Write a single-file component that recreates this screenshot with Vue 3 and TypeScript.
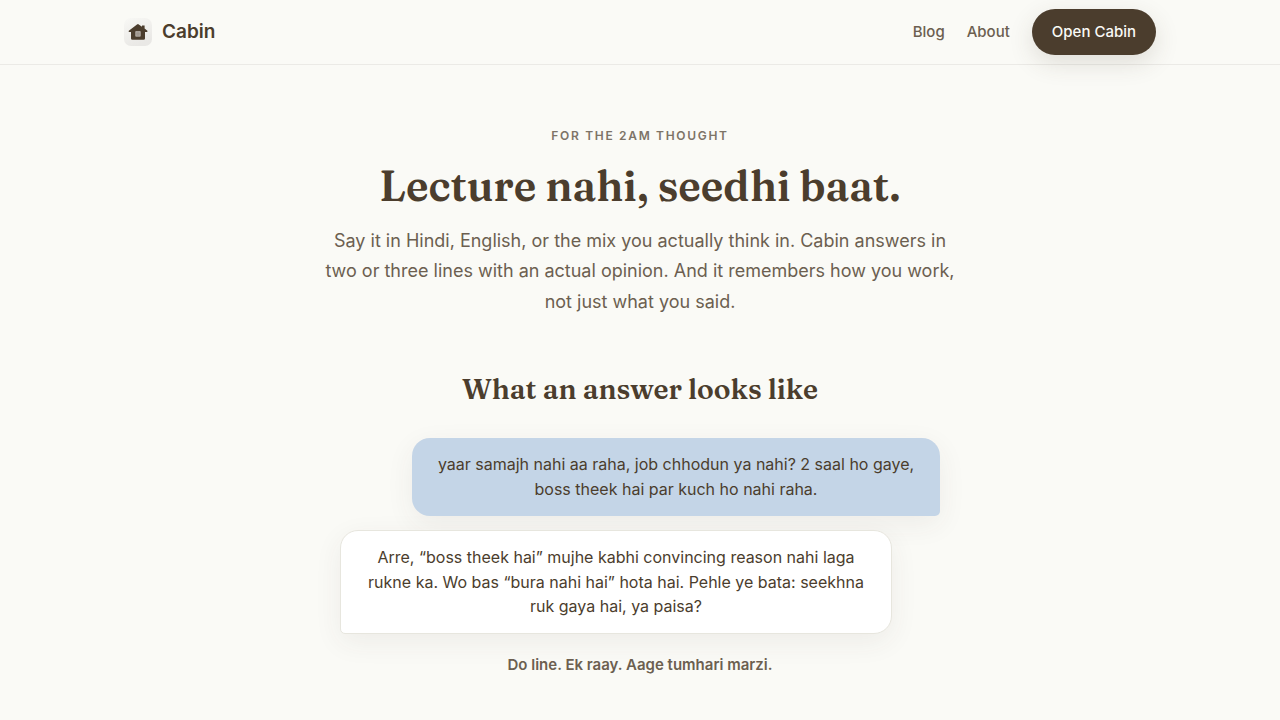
<script setup lang="ts">
interface NavLink {
  label: string
  href: string
}

interface Message {
  from: 'user' | 'cabin'
  text: string
}

const links: NavLink[] = [
  { label: 'Blog', href: '#blog' },
  { label: 'About', href: '#about' },
]

const messages: Message[] = [
  {
    from: 'user',
    text: 'yaar samajh nahi aa raha, job chhodun ya nahi? 2 saal ho gaye, boss theek hai par kuch ho nahi raha.',
  },
  {
    from: 'cabin',
    text: 'Arre, “boss theek hai” mujhe kabhi convincing reason nahi laga rukne ka. Wo bas “bura nahi hai” hota hai. Pehle ye bata: seekhna ruk gaya hai, ya paisa?',
  },
]
</script>

<template>
  <div class="page">
    <header class="header">
      <div class="bar">
        <a class="brand" href="#home">
          <svg class="logo" viewBox="0 0 28 28" aria-hidden="true">
            <defs>
              <linearGradient id="tile" x1="0" y1="0" x2="0.4" y2="1">
                <stop offset="0" stop-color="#f8f8f5" />
                <stop offset="1" stop-color="#e9e8e5" />
              </linearGradient>
            </defs>
            <rect width="28" height="28" rx="7" fill="url(#tile)" />
            <path
              d="M14 6 L18 8.8 V7.4 H20.6 V10.6 L23.4 12.7 Q23.8 14 22.8 14 H21 V20.4 Q21 21.8 19.6 21.8 H8.4 Q7 21.8 7 20.4 V14 H5.2 Q4.2 14 4.8 12.7 L13 6.4 Q13.5 6 14 6 Z"
              fill="#4b3d2d"
            />
            <rect x="11.2" y="13" width="5.6" height="5.8" rx="1" fill="#aaa39b" />
            <path d="M14 13.5 V18.3 M11.7 15.9 H16.3" stroke="#958c83" stroke-width="0.6" />
          </svg>
          <span>Cabin</span>
        </a>
        <nav class="nav" aria-label="Main">
          <a v-for="link in links" :key="link.label" class="link" :href="link.href">{{ link.label }}</a>
          <a class="cta" href="#open">Open Cabin</a>
        </nav>
      </div>
    </header>

    <main class="main">
      <section class="hero">
        <p class="eyebrow">For the 2am thought</p>
        <h1>Lecture nahi, seedhi baat.</h1>
        <p class="lead">
          Say it in Hindi, English, or the mix you actually think in. Cabin answers in two or three
          lines with an actual opinion. And it remembers how you work, not just what you said.
        </p>
      </section>

      <section class="sample">
        <h2>What an answer looks like</h2>
        <div class="chat">
          <p v-for="message in messages" :key="message.from" class="bubble" :class="message.from">
            {{ message.text }}
          </p>
        </div>
        <p class="closing">Do line. Ek raay. Aage tumhari marzi.</p>
      </section>
    </main>
  </div>
</template>

<style>
body {
  margin: 0;
  background: #fafaf6;
}
</style>

<style scoped>
.page {
  min-height: 100vh;
  box-sizing: border-box;
  background: #fafaf6;
  color: #4b3d2d;
  font-family: Inter, 'Liberation Sans', sans-serif;
  font-size: 16px;
}

.header {
  border-bottom: 1px solid #ebeae6;
}

.bar {
  box-sizing: border-box;
  max-width: 1080px;
  min-height: 64px;
  margin: 0 auto;
  padding: 0 24px;
  display: flex;
  align-items: center;
  justify-content: space-between;
}

.brand {
  display: flex;
  align-items: center;
  gap: 10px;
  color: inherit;
  font-size: 19px;
  font-weight: 600;
  line-height: 46px;
  text-decoration: none;
}

.logo {
  width: 28px;
  height: 28px;
}

.nav {
  display: flex;
  align-items: center;
  gap: 22px;
  font-size: 15px;
  font-weight: 500;
  line-height: 46px;
}

.link {
  color: #6c5f50;
  text-decoration: none;
}

.cta {
  padding: 0 20px;
  border-radius: 24px;
  background: #4b3d2d;
  box-shadow: 0 8px 24px rgba(75, 60, 45, 0.15);
  color: #fafaf6;
  text-decoration: none;
}

.main {
  padding: 61px 24px 43px;
  text-align: center;
}

.hero {
  max-width: 640px;
  margin: 0 auto;
}

.eyebrow {
  margin: 0;
  color: #7d7367;
  font-size: 12px;
  font-weight: 600;
  letter-spacing: 0.14em;
  line-height: 20px;
  text-transform: uppercase;
}

h1,
h2 {
  margin: 0;
  font-family: Fraunces, 'Liberation Serif', serif;
  font-weight: 600;
}

h1 {
  margin-top: 13px;
  font-size: 42px;
  line-height: 1.3;
}

.lead {
  margin: 12px 0 0;
  color: #6c5f50;
  font-size: 18px;
  line-height: 1.7;
}

.sample {
  max-width: 600px;
  margin: 54px auto 0;
}

h2 {
  font-size: 28px;
  line-height: 1.35;
}

.chat {
  display: flex;
  flex-direction: column;
  gap: 14px;
  margin-top: 29px;
}

.bubble {
  box-sizing: border-box;
  margin: 0;
  padding: 14px 20px;
  border-radius: 18px;
  box-shadow: 0 8px 28px rgba(65, 60, 50, 0.07);
  line-height: 1.55;
}

.user {
  align-self: flex-end;
  max-width: 88%;
  border-bottom-right-radius: 5px;
  background: #c4d5e7;
}

.cabin {
  align-self: flex-start;
  max-width: 92%;
  border: 1px solid #e7e6de;
  border-bottom-left-radius: 5px;
  background: #ffffff;
}

.closing {
  margin: 18px 0 0;
  color: #6c5f50;
  font-size: 15px;
  font-weight: 600;
  line-height: 26px;
}
</style>
